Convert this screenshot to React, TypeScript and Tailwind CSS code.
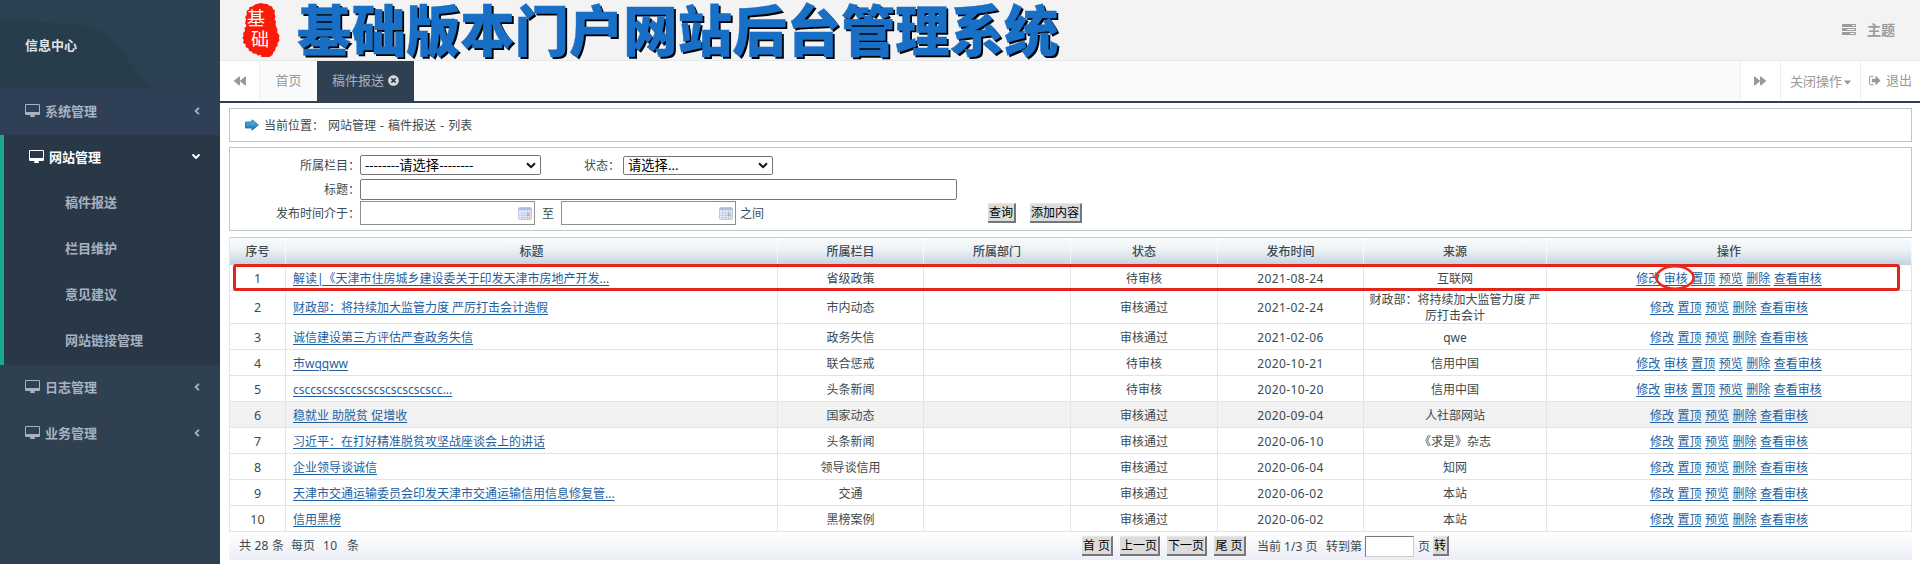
import type { ReactNode } from "react";
import { FaAngleDown, FaAngleLeft, FaBackward, FaCaretDown, FaForward, FaTimesCircle } from "react-icons/fa";

function DesktopIcon() {
  return (
    <svg viewBox="-64 0 1920 1792" className="h-[14px] w-[15px] shrink-0" fill="currentColor">
      <path d="M1728 992v-832q0-13-9.5-22.5t-22.5-9.5h-1600q-13 0-22.5 9.5t-9.5 22.5v832q0 13 9.5 22.5t22.5 9.5h1600q13 0 22.5-9.5t9.5-22.5zm128-832v1088q0 66-47 113t-113 47h-544q0 37 16 77.5t32 71 16 43.5q0 26-19 45t-45 19h-512q-26 0-45-19t-19-45q0-14 16-44t32-70 16-78h-544q-66 0-113-47t-47-113v-1088q0-66 47-113t113-47h1600q66 0 113 47t47 113z" />
    </svg>
  );
}

function TasksIcon() {
  return (
    <svg viewBox="0 0 1792 1792" className="h-[14px] w-[14px]" fill="currentColor">
      <path d="M1024 1408h640v-128h-640v128zm-384-512h1024v-128h-1024v128zm640-512h384v-128h-384v128zm512 832v256q0 26-19 45t-45 19h-1664q-26 0-45-19t-19-45v-256q0-26 19-45t45-19h1664q26 0 45 19t19 45zm0-512v256q0 26-19 45t-45 19h-1664q-26 0-45-19t-19-45v-256q0-26 19-45t45-19h1664q26 0 45 19t19 45zm0-512v256q0 26-19 45t-45 19h-1664q-26 0-45-19t-19-45v-256q0-26 19-45t45-19h1664q26 0 45 19t19 45z" />
    </svg>
  );
}

function SignOutIcon() {
  return (
    <svg viewBox="0 0 1792 1792" className="h-[13px] w-[13px]" fill="currentColor">
      <path d="M640 1440q0 4 1 20t.5 26.5-3 23.5-10 19.5-20.5 6.5h-320q-119 0-203.5-84.5t-84.5-203.5v-704q0-119 84.5-203.5t203.5-84.5h320q13 0 22.5 9.5t9.5 22.5q0 4 1 20t.5 26.5-3 23.5-10 19.5-20.5 6.5h-320q-66 0-113 47t-47 113v704q0 66 47 113t113 47h312l11.5 1 11.5 3 8 5.5 7 9 2 13.5zm928-544q0 26-19 45l-544 544q-19 19-45 19t-45-19-19-45v-288h-448q-26 0-45-19t-19-45v-384q0-26 19-45t45-19h448v-288q0-26 19-45t45-19 45 19l544 544q19 19 19 45z" />
    </svg>
  );
}

function ArrowIcon() {
  return (
    <svg viewBox="0 0 14 12" className="h-3 w-[14px]">
      <defs>
        <linearGradient id="arrow" x1="0" y1="0" x2="0" y2="1">
          <stop offset="0" stopColor="#5cc0ee" />
          <stop offset="1" stopColor="#1a6cab" />
        </linearGradient>
      </defs>
      <path d="M.5 3H7V.8L13.4 6 7 11.2V9H.5z" fill="url(#arrow)" stroke="#2b6f9e" strokeWidth=".9" />
    </svg>
  );
}

function CalendarIcon() {
  return (
    <svg viewBox="0 0 14 13" className="h-[13px] w-[14px]">
      <rect x=".5" y=".5" width="13" height="12" rx="1" fill="#eef3fb" stroke="#bcc8e0" />
      <rect x="1" y="1" width="12" height="2.2" fill="#a9bfe6" />
      <path d="M1 5.8h12M1 8.3h12M1 10.7h12M3.8 3v9M6.6 3v9M9.4 3v9M11.6 3v9" stroke="#b4c3e0" strokeWidth=".7" />
      <rect x="8.6" y="6.2" width="2.6" height="3" fill="#e6a08c" />
    </svg>
  );
}

function SealLogo() {
  return (
    <div className="relative h-[54px] w-[38px] font-['Liberation_Sans','Noto_Sans_CJK_SC',sans-serif]">
      <svg viewBox="0 0 38 54" className="h-full w-full">
        <path
          d="M13 1.500L16 .8 19 0l3 .8 3 .2 3 2 2 .5 1 2.500 2 1.500-.5 3 1 3-.8 3 1.300 2-.5 3 1 3 1 2-.3 3 2.300 3-.5 2 .5 3-2 2.500.2 2.500-2 2-.5 3-2 2-.7 2.500-2.500 1.500-1 2.200-3 .5-2 1.500-2.500-1L19 52l-3 .5-2-1.800-3-.2-1.500-2L7 48l-.5-2.500L3.500 44l.3-2.500L1 40l.8-3L.5 35l1-2.500-.5-2L3 28l-.5-3 2-2L3 20l1-3-.8-3 1.600-2.500L4.500 8 7 6.500 7.500 4l3-.5z"
          fill="#fb1b0b"
        />
      </svg>
      <div className="absolute top-[6px] left-[5px] text-[18px] leading-[20px] font-normal text-white">基</div>
      <div className="absolute top-[27px] left-[9px] text-[18px] leading-[21px] font-normal text-white">础</div>
    </div>
  );
}

function MenuItem({ label }: { label: string }) {
  return (
    <div className="flex h-[46px] items-center pr-5 pb-[2px] pl-[25px] text-[13px] font-semibold text-[#a7b1c2]">
      <DesktopIcon />
      <span className="ml-[5px]">{label}</span>
      <FaAngleLeft className="ml-auto h-[14px] w-[6px]" />
    </div>
  );
}

function Sidebar() {
  return (
    <aside className="flex w-[220px] shrink-0 flex-col bg-[#2f4050]">
      <div className="relative h-[88px] bg-[#2a3f4e]">
        <svg viewBox="0 0 220 88" className="absolute inset-0 h-full w-full">
          <path d="M0 0h220v88h-70L108 34 88 26 0 19z" fill="#2b4050" />
          <path d="M0 19l88 7 20 8 42 54H0z" fill="#283d4b" />
        </svg>
        <div className="relative pt-[35px] pl-[25px] text-[13px] leading-5 font-bold text-[#dfe4ed]">信息中心</div>
      </div>
      <div className="bg-[#2f4056] pt-px">
        <MenuItem label="系统管理" />
      </div>
      <div className="border-l-4 border-[#19aa8d] bg-[#293846] text-[13px] font-semibold text-[#a7b1c2]">
        <div className="flex h-[45px] items-center pr-5 pb-[2px] pl-[25px] text-white">
          <DesktopIcon />
          <span className="ml-[5px]">网站管理</span>
          <FaAngleDown className="ml-auto h-[13px] w-2" />
        </div>
        {["稿件报送", "栏目维护", "意见建议", "网站链接管理"].map((s) => (
          <div key={s} className="flex h-[46px] items-center pb-[2px] pl-[61px]">
            {s}
          </div>
        ))}
        <div className="h-px" />
      </div>
      <MenuItem label="日志管理" />
      <MenuItem label="业务管理" />
    </aside>
  );
}

function TopBar() {
  return (
    <header className="flex h-[61px] items-start border-b border-[#e7eaec] bg-[#f3f3f4]">
      <div className="mt-[3px] ml-[22px]">
        <SealLogo />
      </div>
      <h1 className="ml-[17px] font-['Liberation_Sans','Noto_Sans_CJK_SC',sans-serif] text-[54.4px] leading-[65px] font-black whitespace-nowrap text-[#186fc5] [-webkit-text-stroke:0.4px_#186fc5] [text-shadow:2px_2px_0_#000]">
        基础版本门户网站后台管理系统
      </h1>
      <div className="mt-[20px] mr-[25px] ml-auto flex items-center text-[14px] leading-5 font-semibold text-[#999c9e]">
        <TasksIcon />
        <span className="ml-[11px]">主题</span>
      </div>
    </header>
  );
}

function TabBar() {
  return (
    <nav className="flex h-[42px] border-b-2 border-[#2f4050] bg-[#fafafa] text-[13px] text-[#999]">
      <div className="flex w-10 items-center justify-center border-r border-[#eee] bg-white">
        <FaBackward className="h-3 w-3" />
      </div>
      <div className="flex w-[57px] items-center justify-center pb-[2px]">首页</div>
      <div className="flex w-[97px] items-center bg-[#2f4050] pb-[2px] pl-[15px] text-[#a7b1c2]">
        稿件报送
        <FaTimesCircle className="ml-1 h-[11px] w-[11px] text-[#d8dadd]" />
      </div>
      <div className="ml-auto flex bg-white">
        <div className="flex w-10 items-center justify-center border-l border-[#eee] pr-[2px]">
          <FaForward className="h-3 w-3" />
        </div>
        <div className="flex w-20 items-center border-l border-[#eee] pl-[9px]">
          关闭操作
          <FaCaretDown className="mt-[2px] ml-[2px] h-3 w-[7px]" />
        </div>
        <div className="flex w-[60px] items-center border-l border-[#eee] pb-[2px] pl-2">
          <SignOutIcon />
          <span className="ml-1">退出</span>
        </div>
      </div>
    </nav>
  );
}

function Select({ text, size }: { text: string; size: string }) {
  return (
    <div className={`flex items-center justify-between rounded-[2px] border border-[#767676] bg-white pr-[4px] pl-[4px] text-[13.3px] text-black ${size}`}>
      <span className="whitespace-nowrap">{text}</span>
      <svg viewBox="0 0 10 7" className="h-[7px] w-[10px]">
        <path d="M1 1.200l4 4 4-4" fill="none" stroke="#111" strokeWidth="2" />
      </svg>
    </div>
  );
}

function Label({ children }: { children: ReactNode }) {
  return <div className="w-[130px] shrink-0 pt-px text-right whitespace-nowrap">{children}</div>;
}

function DateInput() {
  return (
    <div className="flex h-6 w-[175px] items-center justify-end border border-[#8f8f8f] bg-white pr-[2px]">
      <CalendarIcon />
    </div>
  );
}

function Button({ children, size }: { children: ReactNode; size: string }) {
  return (
    <button
      className={`flex h-5 items-center justify-center border-t border-r-2 border-b-2 border-t-[#e8e8e8] border-r-[#777] border-b-[#777] bg-[#dcdcdc] pt-px text-[12px] whitespace-nowrap text-black ${size}`}
    >
      {children}
    </button>
  );
}

function SearchForm() {
  return (
    <section className="mt-[5px] flex h-[84px] flex-col border border-[#b9c9c9] bg-white">
      <div className="mt-[7px] flex h-5 items-center">
        <Label>所属栏目：</Label>
        <Select text="--------请选择--------" size="h-5 w-[181px]" />
        <div className="w-[82px] pt-px pl-[43px] whitespace-nowrap">状态：</div>
        <Select text="请选择..." size="h-[19px] w-[150px]" />
      </div>
      <div className="mt-1 flex h-[21px] items-center">
        <Label>标题：</Label>
        <div className="h-[21px] w-[597px] rounded-[2px] border border-[#767676] bg-white" />
      </div>
      <div className="mt-px flex h-6 items-center">
        <Label>发布时间介于：</Label>
        <DateInput />
        <span className="w-[26px] pt-px text-center">至</span>
        <DateInput />
        <span className="ml-1 w-[248px] pt-px">之间</span>
        <Button size="w-7">查询</Button>
        <div className="w-[14px]" />
        <Button size="w-[52px]">添加内容</Button>
      </div>
    </section>
  );
}

type Row = { title: string; column: string; pending?: boolean; date: string; source: string };

const rows: Row[] = [
  { title: "解读|《天津市住房城乡建设委关于印发天津市房地产开发...", column: "省级政策", pending: true, date: "2021-08-24", source: "互联网" },
  { title: "财政部：将持续加大监管力度 严厉打击会计造假", column: "市内动态", date: "2021-02-24", source: "财政部：将持续加大监管力度 严厉打击会计" },
  { title: "诚信建设第三方评估严查政务失信", column: "政务失信", date: "2021-02-06", source: "qwe" },
  { title: "市wqqww", column: "联合惩戒", pending: true, date: "2020-10-21", source: "信用中国" },
  { title: "csccscscsccscscscscscscscc...", column: "头条新闻", pending: true, date: "2020-10-20", source: "信用中国" },
  { title: "稳就业 助脱贫 促增收", column: "国家动态", date: "2020-09-04", source: "人社部网站" },
  { title: "习近平：在打好精准脱贫攻坚战座谈会上的讲话", column: "头条新闻", date: "2020-06-10", source: "《求是》杂志" },
  { title: "企业领导谈诚信", column: "领导谈信用", date: "2020-06-04", source: "知网" },
  { title: "天津市交通运输委员会印发天津市交通运输信用信息修复管...", column: "交通", date: "2020-06-02", source: "本站" },
  { title: "信用黑榜", column: "黑榜案例", date: "2020-06-02", source: "本站" },
];

const gridCols = "grid grid-cols-[56px_492px_146px_147px_147px_146px_183px_365px]";
const cellBase = "flex items-center border-r border-[#dfe5ea]";
const link = "text-[#1f5f9f] underline underline-offset-2 whitespace-nowrap";

function ArticleTable() {
  const headers = ["序号", "标题", "所属栏目", "所属部门", "状态", "发布时间", "来源", "操作"];
  return (
    <section className="relative mt-[6px] border-l border-[#dfe5ea]">
      <div className={`${gridCols} h-[28px] border-t border-[#c3cccc] bg-linear-to-b from-[#fafcfc] via-[#e9eff3] to-[#c3d2e0] font-medium`}>
        {headers.map((h) => (
          <div key={h} className="flex items-center justify-center border-r border-white/60 pt-px">
            {h}
          </div>
        ))}
      </div>
      {rows.map((r, i) => {
        const height = i === 1 ? "h-[33px]" : "h-[26px]";
        const left = `${cellBase} ${i === 1 ? "pt-px" : "pt-[2px]"}`;
        const cell = `${left} justify-center`;
        const ops = r.pending
          ? ["修改", "审核", "置顶", "预览", "删除", "查看审核"]
          : ["修改", "置顶", "预览", "删除", "查看审核"];
        return (
          <div key={i} className={`${gridCols} ${height} border-b border-[#dfe5ea] ${i === 5 ? "bg-[#f1f1f1]" : "bg-white"}`}>
            <div className={`${cell} text-[12.5px]`}>{i + 1}</div>
            <div className={`${left} pl-[7px]`}>
              <a className={link}>{r.title}</a>
            </div>
            <div className={cell}>{r.column}</div>
            <div className={cell} />
            <div className={cell}>{r.pending ? "待审核" : "审核通过"}</div>
            <div className={`${cell} tracking-[0.4px]`}>{r.date}</div>
            <div className={`${cell} px-1 text-center leading-4`}>{r.source}</div>
            <div className={`${cell} gap-[3.5px]`}>
              {ops.map((o) => (
                <a key={o} className={link}>
                  {o}
                </a>
              ))}
            </div>
          </div>
        );
      })}
      <div className="absolute top-[27px] left-[3px] h-[27px] w-[1667px] rounded-[3px] border-3 border-[#e3241b]" />
      <svg viewBox="0 0 40 25" className="absolute top-[28px] left-[1425px] h-[25px] w-10">
        <ellipse cx="20" cy="12.5" rx="18.5" ry="11.2" fill="none" stroke="#ee2a1c" strokeWidth="2.5" />
      </svg>
    </section>
  );
}

function Pager() {
  return (
    <footer className="flex h-[28px] items-center bg-linear-to-b from-white to-[#eceef6] pl-[10px] whitespace-nowrap">
      <span className="w-[52px] [word-spacing:0.5px]">共 28 条</span>
      <span className="w-8">每页</span>
      <span className="w-6 tracking-[0.4px]">10</span>
      <span className="w-[735px]">条</span>
      <div className="flex items-center gap-[7px]">
        <Button size="w-[31px]">首 页</Button>
        <Button size="w-10">上一页</Button>
        <Button size="w-10">下一页</Button>
        <Button size="w-8">尾 页</Button>
      </div>
      <span className="ml-[11px] w-[69px] pt-px">当前 1/3 页</span>
      <span className="pt-px">转到第</span>
      <div className="ml-[3px] h-[21px] w-[49px] border border-[#777] border-r-[#ccc] border-b-[#ccc] bg-white" />
      <span className="mr-[3px] ml-1 pt-px">页</span>
      <Button size="w-4">转</Button>
    </footer>
  );
}

export default function App() {
  return (
    <div className="flex h-[564px] w-[1920px] overflow-hidden bg-white font-['Noto_Sans','Noto_Sans_CJK_SC',sans-serif] text-[12px] leading-4 text-[#3c4a4f]">
      <Sidebar />
      <main className="flex min-w-0 flex-1 flex-col">
        <TopBar />
        <TabBar />
        <div className="mt-[5px] mr-[8px] ml-[9px]">
          <div className="flex h-[34px] items-center border border-[#b9c9c9] bg-white pl-[15px]">
            <ArrowIcon />
            <span className="ml-[5px] w-[64px] pt-px">当前位置：</span>
            <span className="pt-px [word-spacing:1px]">网站管理 - 稿件报送 - 列表</span>
          </div>
          <SearchForm />
          <ArticleTable />
          <Pager />
        </div>
      </main>
    </div>
  );
}
